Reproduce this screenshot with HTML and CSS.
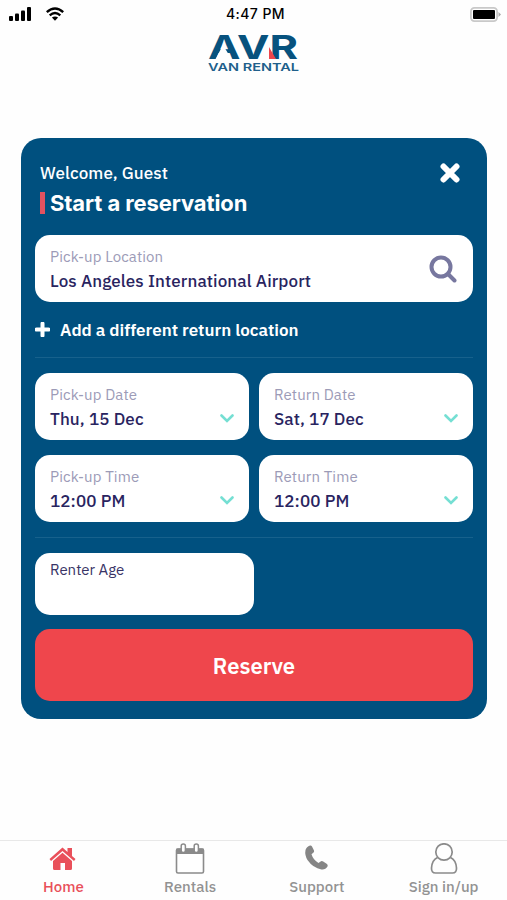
FILE: index.html
```html
<!DOCTYPE html>
<html lang="en">
<head>
<meta charset="utf-8">
<title>AVR Van Rental</title>
<link rel="stylesheet" href="styles.css">
</head>
<body>
<div class="app">
  <header class="status">
    <div class="signals">
      <svg width="23" height="14" viewBox="0 0 23 14"><rect x="0" y="9" width="4" height="5" rx="1"/><rect x="6" y="6.5" width="4" height="7.5" rx="1"/><rect x="12" y="3.5" width="4" height="10.500" rx="1"/><rect x="18" y="0" width="4" height="14" rx="1"/></svg>
      <svg width="18" height="14" viewBox="0 0 18 14"><g fill="none" stroke="#000" stroke-width="2.400"><path d="M.8 5.100Q9-2.200 17.200 5.100"/><path d="M3.700 8.300Q9 3.700 14.300 8.300"/></g><path d="M9 13.700 5.900 10.600Q9 8.200 12.100 10.600Z"/></svg>
    </div>
    <time class="clock">4:47 PM</time>
    <svg class="battery" width="32" height="15" viewBox="0 0 32 15"><rect x=".9" y=".9" width="26.200" height="13.200" rx="3.500" fill="#fff" stroke="#c9c9c9" stroke-width="1.800"/><rect x="3" y="3" width="22" height="9" rx="1"/><path d="M28.500 5 31 7.500 28.500 10Z" fill="#aaa"/></svg>
  </header>
  <div class="brand">
    <svg width="92" height="40" viewBox="0 0 92 40">
      <text class="logo-main" x="0" y="25" textLength="90" lengthAdjust="spacingAndGlyphs">AVR</text>
      <path d="M15 11 24 26H7Z" fill="#fff"/>
      <path d="M61 13 68 25H61Z" fill="#ef464c"/>
      <text class="logo-sub" x="0" y="37" textLength="91" lengthAdjust="spacingAndGlyphs">VAN RENTAL</text>
    </svg>
  </div>
  <main class="card">
    <div class="intro">
      <div>
        <p class="welcome">Welcome, Guest</p>
        <h1 class="title">Start a reservation</h1>
      </div>
      <svg class="close" width="20" height="20" viewBox="0 0 20 20"><path d="M3.500 3.500 16.500 16.500M16.500 3.500 3.500 16.500" stroke="#fff" stroke-width="6" stroke-linecap="round"/></svg>
    </div>
    <div class="field location">
      <span class="label loc-label">Pick-up Location</span>
      <span class="value loc-value">Los Angeles International Airport</span>
      <svg class="search" width="28" height="28" viewBox="0 0 28 28"><g fill="none" stroke="#77779f" stroke-width="4" stroke-linecap="round"><circle cx="12" cy="12" r="9.500"/><path d="M19.500 19.500 25.500 25.500"/></g></svg>
    </div>
    <div class="add">
      <svg width="15" height="15" viewBox="0 0 15 15"><path d="M7.500 1.500V13.500M1.500 7.500H13.500" stroke="#fff" stroke-width="4" stroke-linecap="round"/></svg>
      <span>Add a different return location</span>
    </div>
    <div class="grid">
      <div class="field"><span class="label">Pick-up Date</span><span class="value">Thu, 15 Dec</span><svg class="chev" width="14" height="9" viewBox="0 0 14 9"><path d="M1.500 1.500 7 7 12.500 1.500"/></svg></div>
      <div class="field"><span class="label">Return Date</span><span class="value">Sat, 17 Dec</span><svg class="chev" width="14" height="9" viewBox="0 0 14 9"><path d="M1.500 1.500 7 7 12.500 1.500"/></svg></div>
      <div class="field"><span class="label">Pick-up Time</span><span class="value">12:00 PM</span><svg class="chev" width="14" height="9" viewBox="0 0 14 9"><path d="M1.500 1.500 7 7 12.500 1.500"/></svg></div>
      <div class="field"><span class="label">Return Time</span><span class="value">12:00 PM</span><svg class="chev" width="14" height="9" viewBox="0 0 14 9"><path d="M1.500 1.500 7 7 12.500 1.500"/></svg></div>
    </div>
    <div class="age">Renter Age</div>
    <button class="reserve">Reserve</button>
  </main>
  <nav class="tabs">
    <a class="tab active">
      <svg width="32" height="32" viewBox="0 0 32 32" fill="#e9505a"><path d="M20.500 5H25V13L28.500 16 27 18 15.500 8 4 18 2.500 16 15.500 4.500 20.500 9Z"/><path d="M6 18 15.500 9.800 25 18V25.500Q25 27 23.500 27H18V20H13.500V27H7.500Q6 27 6 25.500Z"/></svg>
      <span>Home</span>
    </a>
    <a class="tab">
      <svg width="32" height="32" viewBox="0 0 32 32"><rect x="2.500" y="6" width="27" height="24" rx="1.500" fill="#fff" stroke="#8b8b8b" stroke-width="1.600"/><path d="M2.500 5.500H29.500V11H2.500Z" fill="#8b8b8b"/><g fill="#fff" stroke="#8b8b8b" stroke-width="1.500"><rect x="7.200" y="1" width="4.200" height="8.500" rx="2.100"/><rect x="20.200" y="1" width="4.200" height="8.500" rx="2.100"/></g></svg>
      <span>Rentals</span>
    </a>
    <a class="tab">
      <svg width="32" height="32" viewBox="0 0 32 32"><path d="M9 2.500Q10.300 2.200 11 3.500L13 7.500Q13.500 9 12.300 9.700L10.500 11.200Q12 16.500 17.500 20L20 18.300Q21 17.700 22.200 18.500L26 21Q27.200 22 26.500 23.500 24.500 27 20.500 26.500 12 25 6.500 17 3.500 12 4.500 7 5.500 3.500 9 2.500Z" fill="#858585"/></svg>
      <span>Support</span>
    </a>
    <a class="tab">
      <svg width="32" height="32" viewBox="0 0 32 32"><g fill="none" stroke="#8b8b8b" stroke-width="1.700"><path d="M9.500 14.500Q4 17 3.500 25 3.300 30 7.500 30H24.500Q28.700 30 28.500 25 28 17 22.500 14.500"/><circle cx="16" cy="9" r="8.200"/></g></svg>
      <span>Sign in/up</span>
    </a>
  </nav>
</div>
</body>
</html>
```

FILE: styles.css
```css
* { box-sizing: border-box; }
body { margin: 0; background: #fefefe; font-family: "IBM Plex Sans", Roboto, sans-serif; }
svg { display: block; flex: none; }
.app { height: 900px; display: flex; flex-direction: column; overflow: hidden; }
.status { height: 28px; padding: 0 5px 0 9px; display: grid; grid-template-columns: 1fr auto 1fr; align-items: center; }
.signals { display: flex; gap: 14px; }
.clock { font: 500 14px/28px Inter, sans-serif; letter-spacing: .4px; }
.battery { justify-self: end; }
.brand { height: 110px; padding: 6px 0 0 208px; }
.logo-main { font: 700 33px Inter, sans-serif; fill: #07527e; }
.logo-sub { font: 600 10.500px Inter, sans-serif; fill: #205f8b; }
.card { margin: 0 20px 0 21px; height: 581px; padding: 20px 14px; border-radius: 20px; background: #00507f; color: #fff; }
.intro { height: 77px; display: flex; justify-content: space-between; padding: 0 13px 0 5px; }
.close { margin-top: 5px; }
.welcome { margin: 5px 0 0; font-size: 17px; line-height: 20px; font-weight: 500; letter-spacing: .1px; }
.title { margin: 9px 0 0; padding-left: 5px; border-left: 5px solid #e35260; font: 700 22px/22px Inter, sans-serif; letter-spacing: -.1px; white-space: nowrap; }
.field { position: relative; height: 67px; border-radius: 15px; background: #fff; padding: 11px 15px; display: flex; flex-direction: column; }
.label { font-size: 15px; line-height: 22px; color: #9c9bb7; letter-spacing: .1px; }
.value { font-size: 17px; line-height: 26px; font-weight: 500; color: #29245f; letter-spacing: .1px; }
.search { position: absolute; right: 16px; top: 20px; }
.chev { position: absolute; right: 15px; top: 41px; fill: none; stroke: #75dfd3; stroke-width: 2.600; stroke-linecap: round; }
.add { height: 55px; display: flex; align-items: center; gap: 10px; font-size: 17px; font-weight: 600; }
.grid { border: solid #17618c; border-width: 1px 0; padding: 15px 0; display: grid; grid-template-columns: 1fr 1fr; gap: 15px 10px; }
.age { width: 219px; height: 62px; margin-top: 15px; padding: 7px 15px; border-radius: 15px; background: #fff; color: #393466; font-size: 15px; line-height: 20px; }
.reserve { display: block; width: 100%; height: 72px; margin-top: 14px; border: 0; border-radius: 15px; background: #ef464c; color: #fff; font: 600 22px "IBM Plex Sans", Roboto, sans-serif; }
.tabs { height: 60px; margin-top: auto; padding-top: 2px; border-top: 1px solid #e8e8e8; display: grid; grid-template-columns: repeat(4, 1fr); }
.tab { display: flex; flex-direction: column; align-items: center; color: #929292; font-size: 15px; font-weight: 500; line-height: 24px; }
.active { color: #e9505a; }
```
